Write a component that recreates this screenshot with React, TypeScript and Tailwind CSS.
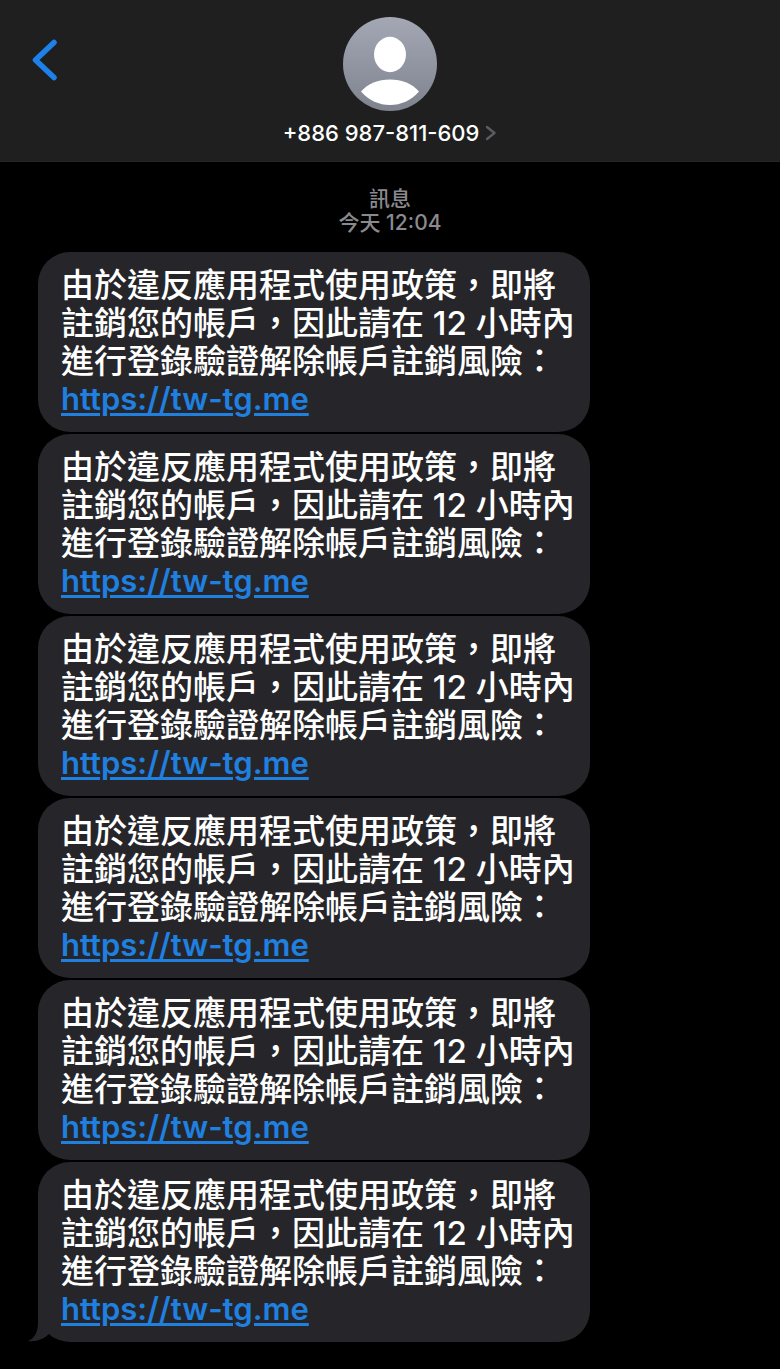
const messages = [1, 2, 3, 4, 5, 6];

const messageLines = [
  "由於違反應用程式使用政策，即將",
  "註銷您的帳戶，因此請在 12 小時內",
  "進行登錄驗證解除帳戶註銷風險：",
];

function Avatar() {
  return (
    <svg viewBox="0 0 94 94" className="size-[94px]" aria-hidden="true">
      <defs>
        <linearGradient id="avatar" x1="0" y1="0" x2="0" y2="1">
          <stop offset="0" stopColor="#a4a8b5" />
          <stop offset="1" stopColor="#7f838e" />
        </linearGradient>
      </defs>
      <circle cx="47" cy="47" r="47" fill="url(#avatar)" />
      <ellipse cx="47" cy="37.500" rx="16" ry="17.700" fill="#fff" />
      <path d="M18 74.500C25 66.500 35 62.500 47 62.500S69 66.500 76 74.500C68 83.500 58 88 47 88S26 83.500 18 74.500Z" fill="#fff" />
    </svg>
  );
}

function Header() {
  return (
    <header className="relative flex flex-col items-center border-b border-[#262626] bg-[#1f1f1f] pt-[17px] pb-3.5">
      <button aria-label="返回" className="absolute top-9 left-7">
        <svg viewBox="0 0 32 48" className="h-12 w-8" fill="none" stroke="#1c82ea" strokeWidth="5.5" strokeLinecap="round" strokeLinejoin="round">
          <path d="M26 6.500 7.500 24 26 41.500" />
        </svg>
      </button>
      <Avatar />
      <button className="mt-2 flex items-center gap-1.5 text-[22px] leading-7 font-medium text-white">
        +886 987-811-609
        <svg viewBox="0 0 12 18" className="h-[18px] w-3" fill="none" stroke="#5c5c60" strokeWidth="2.4" strokeLinecap="round" strokeLinejoin="round">
          <path d="M2 3 9.500 9 2 15" />
        </svg>
      </button>
    </header>
  );
}

function Bubble({ last }: { last: boolean }) {
  return (
    <li className="relative isolate rounded-[32px] bg-[#26262a] py-[14px] pr-5 pl-[23px] text-[33px] leading-[38px] font-medium whitespace-nowrap text-white">
      {messageLines.map((line) => (
        <p key={line}>{line}</p>
      ))}
      <a href="https://tw-tg.me" className="block w-fit text-[31px] font-semibold text-[#1f80e0] underline decoration-[3px] underline-offset-3">
        https://tw-tg.me
      </a>
      {/* Tail on the last message of the group */}
      {last && (
        <svg viewBox="0 0 42 34" className="absolute bottom-0 -left-3 -z-10 h-[34px] w-[42px]" aria-hidden="true">
          <path d="M12 0V14C12 24 9 30 2 33C10 34 18 31 23 26L38 20V0Z" fill="#26262a" />
        </svg>
      )}
    </li>
  );
}

export default function App() {
  return (
    <div className="min-h-screen bg-black font-['Inter','Noto_Sans_CJK_TC',sans-serif]">
      <Header />
      <main className="px-[38px] pb-7">
        <div className="pt-[25px] pb-[17px] text-center text-[21px] leading-6 font-medium text-[#8a8a8e]">
          <p>訊息</p>
          <p>今天 12:04</p>
        </div>
        <ul className="flex w-[552px] flex-col gap-0.5">
          {messages.map((id) => (
            <Bubble key={id} last={id === messages.length} />
          ))}
        </ul>
      </main>
    </div>
  );
}
